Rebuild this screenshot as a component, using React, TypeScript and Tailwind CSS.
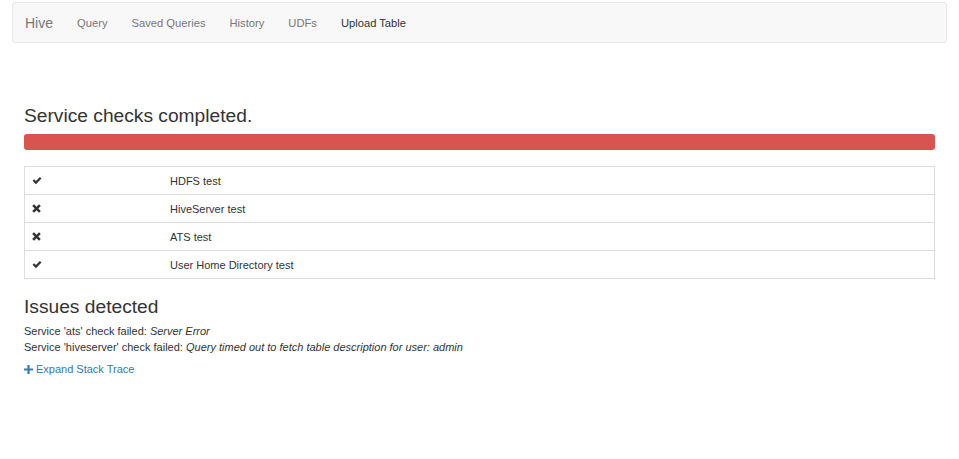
import React from "react";

function CheckIcon() {
  return (
    <svg width="10" height="9" viewBox="0 0 10 9">
      <path d="M0.6 4.8 L2.2 3.3 L3.9 5 L7.9 1 L9.5 2.6 L3.9 8.2 Z" fill="#333" />
    </svg>
  );
}

function CrossIcon() {
  return (
    <svg width="9" height="9" viewBox="0 0 9 9">
      <path
        d="M2 0.2 L4.5 2.7 L7 0.2 L8.8 2 L6.3 4.5 L8.8 7 L7 8.8 L4.5 6.3 L2 8.8 L0.2 7 L2.7 4.5 L0.2 2 Z"
        fill="#333"
      />
    </svg>
  );
}

const checks = [
  { ok: true, name: "HDFS test" },
  { ok: false, name: "HiveServer test" },
  { ok: false, name: "ATS test" },
  { ok: true, name: "User Home Directory test" },
];

const links = ["Query", "Saved Queries", "History", "UDFs", "Upload Table"];

export default function App() {
  return (
    <div
      className="min-h-[459px] bg-white text-[#333] text-[11px] leading-[16px]"
      style={{ fontFamily: '"Liberation Sans", Arial, sans-serif' }}
    >
      <div className="pt-[2px] px-[12px]">
        <nav className="flex h-[41px] items-center rounded-[3px] border border-[#e7e7e7] bg-[#f8f8f8]">
          <span className="px-[12px] text-[14px] text-[#777]">Hive</span>
          {links.map((l, i) => (
            <span
              key={l}
              className={
                "px-[12px] text-[11.2px] " +
                (i === links.length - 1 ? "text-[#333]" : "text-[#777]")
              }
            >
              {l}
            </span>
          ))}
        </nav>
      </div>

      <div className="px-[24px]">
        <h3 className="mt-[62px] text-[19.2px] leading-[21px] text-[#333]">
          Service checks completed.
        </h3>
        <div className="mt-[8px] h-[16px] rounded-[3px] bg-[#d9534f]" />

        <div className="mt-[16px] border border-[#ddd]">
          {checks.map((c, i) => (
            <div
              key={c.name}
              className={
                "flex items-center " + (i > 0 ? "h-[28px] border-t border-[#ddd]" : "h-[27px]")
              }
            >
              <div className="flex w-[145px] items-center pl-[7px]">
                {c.ok ? <CheckIcon /> : <CrossIcon />}
              </div>
              <div>{c.name}</div>
            </div>
          ))}
        </div>

        <h3 className="mt-[17px] text-[19.2px] leading-[21px] text-[#333]">Issues detected</h3>
        <div className="mt-[6px]">
          <div>
            Service 'ats' check failed: <i>Server Error</i>
          </div>
          <div>
            Service 'hiveserver' check failed:{" "}
            <i>Query timed out to fetch table description for user: admin</i>
          </div>
        </div>
        <div className="mt-[6px] flex items-center gap-[3px] text-[#337ab7]">
          <svg width="9" height="9" viewBox="0 0 9 9">
            <path d="M3.4 0 H5.6 V3.4 H9 V5.6 H5.6 V9 H3.4 V5.6 H0 V3.4 H3.4 Z" fill="#337ab7" />
          </svg>
          <span>Expand Stack Trace</span>
        </div>
      </div>
    </div>
  );
}
